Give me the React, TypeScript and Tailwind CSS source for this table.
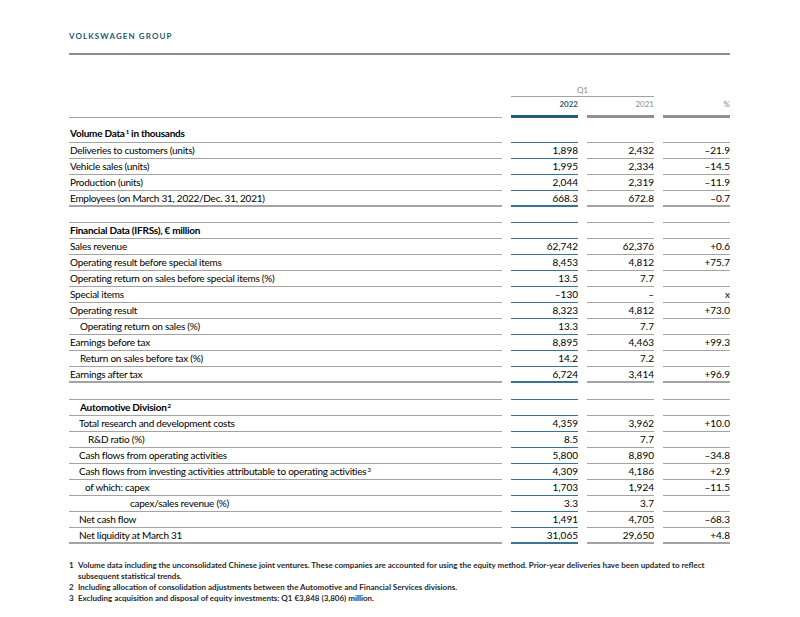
type Row = {
  label: string;
  sup?: string;
  a?: string;
  b?: string;
  c?: string;
  indent?: string;
  head?: boolean;
  last?: boolean;
};

const volume: Row[] = [
  { label: "Volume Data", sup: "1", head: true },
  { label: "Deliveries to customers (units)", a: "1,898", b: "2,432", c: "–21.9" },
  { label: "Vehicle sales (units)", a: "1,995", b: "2,334", c: "–14.5" },
  { label: "Production (units)", a: "2,044", b: "2,319", c: "–11.9" },
  { label: "Employees (on March 31, 2022/Dec. 31, 2021)", a: "668.3", b: "672.8", c: "–0.7", last: true },
];

const financial: Row[] = [
  { label: "Financial Data (IFRSs), € million", head: true },
  { label: "Sales revenue", a: "62,742", b: "62,376", c: "+0.6" },
  { label: "Operating result before special items", a: "8,453", b: "4,812", c: "+75.7" },
  { label: "Operating return on sales before special items (%)", a: "13.5", b: "7.7", c: "" },
  { label: "Special items", a: "–130", b: "–", c: "x" },
  { label: "Operating result", a: "8,323", b: "4,812", c: "+73.0" },
  { label: "Operating return on sales (%)", a: "13.3", b: "7.7", c: "", indent: "pl-[11px]" },
  { label: "Earnings before tax", a: "8,895", b: "4,463", c: "+99.3" },
  { label: "Return on sales before tax (%)", a: "14.2", b: "7.2", c: "", indent: "pl-[11px]" },
  { label: "Earnings after tax", a: "6,724", b: "3,414", c: "+96.9", last: true },
];

const automotive: Row[] = [
  { label: "Automotive Division", sup: "2", head: true, indent: "pl-[11px]" },
  { label: "Total research and development costs", a: "4,359", b: "3,962", c: "+10.0", indent: "pl-[10px]" },
  { label: "R&D ratio (%)", a: "8.5", b: "7.7", c: "", indent: "pl-[19px]" },
  { label: "Cash flows from operating activities", a: "5,800", b: "8,890", c: "–34.8", indent: "pl-[10px]" },
  {
    label: "Cash flows from investing activities attributable to operating activities",
    sup: "3",
    a: "4,309",
    b: "4,186",
    c: "+2.9",
    indent: "pl-[10px]",
  },
  { label: "of which: capex", a: "1,703", b: "1,924", c: "–11.5", indent: "pl-[16px]" },
  { label: "capex/sales revenue (%)", a: "3.3", b: "3.7", c: "", indent: "pl-[61px]" },
  { label: "Net cash flow", a: "1,491", b: "4,705", c: "–68.3", indent: "pl-[10px]" },
  { label: "Net liquidity at March 31", a: "31,065", b: "29,650", c: "+4.8", indent: "pl-[10px]", last: true },
];

const TableRow = ({ row, first }: { row: Row; first?: boolean }) => {
  const h = row.head ? (first ? "h-[25px]" : "h-[17px] border-t") : "h-4";
  const b = row.last ? "border-b-2" : "border-b";
  return (
    <>
      <div
        className={`${h} ${b} flex items-center border-[#a3a3a3] pb-px tracking-[-0.25px] ${row.indent ?? "pl-[1px]"} ${row.head ? "font-bold" : ""} ${first ? "pt-[6px]" : ""}`}
      >
        <span>
          {row.label}
          {row.sup && <sup className="ml-[1px] text-[6px]">{row.sup}</sup>}
          {row.head && first && " in thousands"}
        </span>
      </div>
      <div className={`${h} ${b} flex items-center justify-end border-[#3a7490] pb-px`}>{row.a}</div>
      <div className={`${h} ${b} flex items-center justify-end border-[#a3a3a3] pb-px`}>{row.b}</div>
      <div className={`${h} ${b} flex items-center justify-end border-[#a3a3a3] pb-px`}>{row.c}</div>
    </>
  );
};

const Section = ({ rows, first, className }: { rows: Row[]; first?: boolean; className?: string }) => (
  <div className={`grid grid-cols-[433px_67px_67px_67px] gap-x-[9px] ${className ?? ""}`}>
    {rows.map((r) => (
      <TableRow key={r.label} row={r} first={first && r.head} />
    ))}
  </div>
);

const App = () => {
  return (
    <div
      className="h-[617px] w-[800px] bg-white pl-[69px] pt-[32px] text-[10px] leading-none text-black"
      style={{ fontFamily: '"Lato", sans-serif' }}
    >
      <div className="w-[661px]">
        <div className="flex h-[23px] items-start border-b-2 border-[#8c8c8c] text-[8px] font-bold tracking-[1.1px] text-[#1d5b74]">
          <span>VOLKSWAGEN GROUP</span>
        </div>

        <div className="mt-[28px] grid grid-cols-[433px_67px_67px_67px] gap-x-[9px] text-[8px]">
          <div />
          <div className="col-span-2 flex h-[14px] items-start justify-center border-b border-[#a3a3a3] pt-[3px] text-[#8a8a8a]">
            Q1
          </div>
          <div />
          <div className="h-[21px] border-b border-[#a3a3a3]" />
          <div className="flex h-[21px] items-start justify-end border-b-[3px] border-[#1f5d7a] pt-[3px] font-bold text-[#1f5d7a]">
            2022
          </div>
          <div className="flex h-[21px] items-start justify-end border-b-[3px] border-[#8f8f8f] pt-[3px] text-[#8a8a8a]">
            2021
          </div>
          <div className="flex h-[21px] items-start justify-end border-b-[3px] border-[#8f8f8f] pt-[3px] text-[#8a8a8a]">
            %
          </div>
        </div>

        <Section rows={volume} first />
        <Section rows={financial} className="mt-[15px]" />
        <Section rows={automotive} className="mt-[16px]" />

        <div className="mt-[16px] text-[8px] font-bold leading-[11px] text-[#2a2a2a]">
          <div className="flex">
            <span className="w-[9px] shrink-0">1</span>
            <span className="w-[640px]">
              Volume data including the unconsolidated Chinese joint ventures. These companies are accounted for using
              the equity method. Prior-year deliveries have been updated to reflect subsequent statistical trends.
            </span>
          </div>
          <div className="flex">
            <span className="w-[9px] shrink-0">2</span>
            <span>Including allocation of consolidation adjustments between the Automotive and Financial Services divisions.</span>
          </div>
          <div className="flex">
            <span className="w-[9px] shrink-0">3</span>
            <span>Excluding acquisition and disposal of equity investments: Q1 €3,848 (3,806) million.</span>
          </div>
        </div>
      </div>
    </div>
  );
};

export default App;
